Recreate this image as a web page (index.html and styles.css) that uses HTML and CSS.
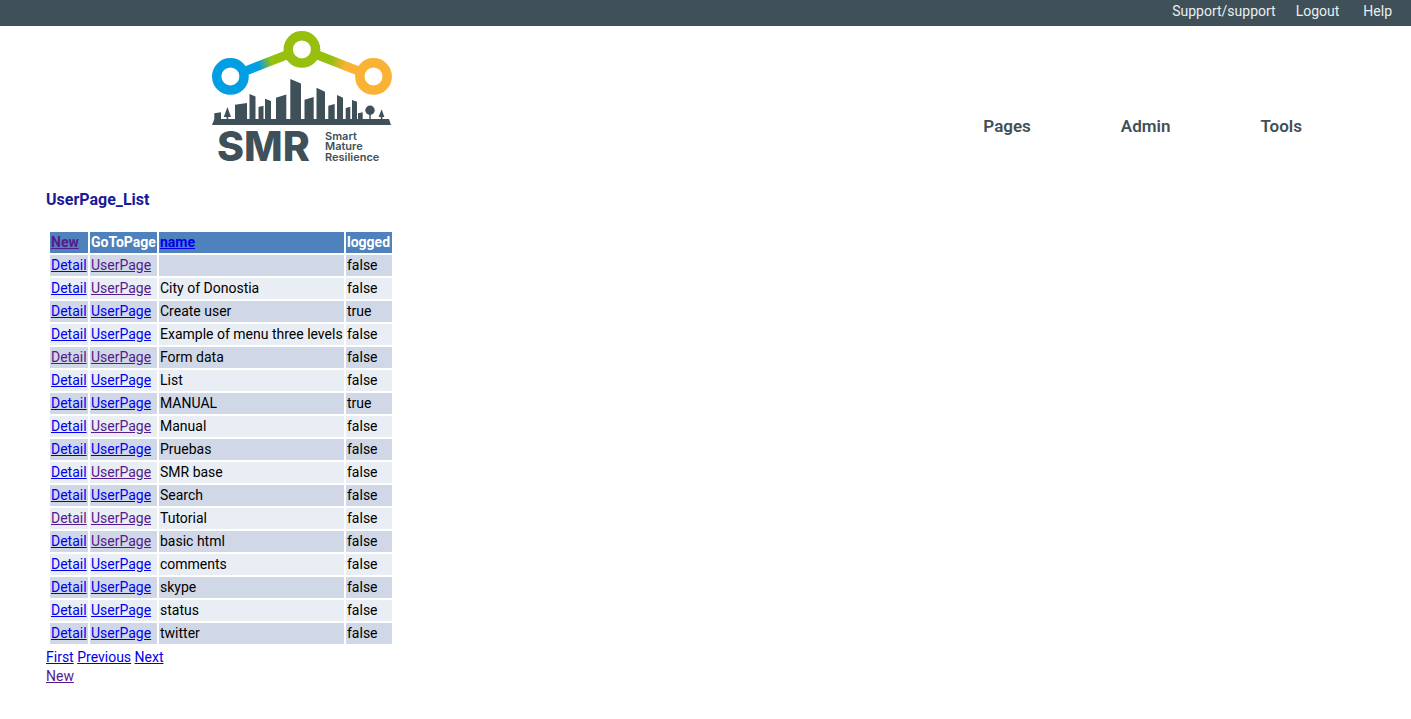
FILE: index.html
```html
<!DOCTYPE html>
<html lang="en">
<head>
<meta charset="utf-8">
<title>UserPage_List</title>
<link rel="stylesheet" href="styles.css">
</head>
<body>
<nav class="topbar" aria-label="Account">
  <a href="#">Support/support</a>
  <a href="#">Logout</a>
  <a class="help" href="#">Help</a>
</nav>
<header class="header">
  <a class="logo" href="#" aria-label="SMR home">
    <svg width="180" height="134" viewBox="212 30 180 134">
      <defs>
        <linearGradient id="bg" gradientUnits="userSpaceOnUse" x1="248" y1="70" x2="284" y2="57">
          <stop offset="0.3" stop-color="#009fe3"/><stop offset="0.65" stop-color="#97bf0d"/>
        </linearGradient>
        <linearGradient id="go" gradientUnits="userSpaceOnUse" x1="320" y1="57" x2="356" y2="70">
          <stop offset="0.3" stop-color="#97bf0d"/><stop offset="0.7" stop-color="#f9b233"/>
        </linearGradient>
      </defs>
      <path d="M243 72L289 54" stroke="url(#bg)" stroke-width="9"/>
      <path d="M315 54L361 72" stroke="url(#go)" stroke-width="9"/>
      <g fill="#fff" stroke-width="9.4">
        <circle cx="230.4" cy="76.4" r="13.7" stroke="#009fe3"/>
        <circle cx="301.9" cy="49.4" r="13.7" stroke="#97bf0d"/>
        <circle cx="373.5" cy="76.4" r="13.7" stroke="#f9b233"/>
      </g>
      <g fill="#3f5058">
        <path d="M212 125L214.3 119V113.3L221 112.3V119H226.6V117H223.8L227.4 107L231 117H228.2V119H235V104.7L247 103V119H249.5V94L255.5 96.5V119H258.5V107L263.5 105.7V119H265V98.7L271 101V119H276V97.7L286.3 94.5V119H290.3V79L301 83.5V119H304.5V99.7L313.7 97V119H316.5V87.7L325 91.7V119H328.3V105.7L334.7 104V119H337V95L343 97.7V119H345.7V108L350.3 106.7V119H352V100L357 101.7V119H358V113.3L362.7 112.3V119H369.3V114H370.7V119H380.8V117H378.6L381.6 109.3L384.4 117H382.4V119H389L391 125Z"/>
        <circle cx="370" cy="110.3" r="4.7"/>
        <text class="logo-name" x="217" y="161">SMR</text>
        <text class="logo-tag" x="325" y="140">Smart</text>
        <text class="logo-tag" x="325" y="150">Mature</text>
        <text class="logo-tag" x="325" y="161">Resilience</text>
      </g>
    </svg>
  </a>
  <nav class="menu" aria-label="Main">
    <a href="#">Pages</a>
    <a href="#">Admin</a>
    <a href="#">Tools</a>
  </nav>
</header>
<main class="content">
  <h1 class="title">UserPage_List</h1>
  <table class="list">
    <colgroup><col class="col-detail"><col class="col-page"><col class="col-name"><col class="col-logged"></colgroup>
    <thead>
      <tr><th><a class="seen" href="#">New</a></th><th>GoToPage</th><th><a href="#">name</a></th><th>logged</th></tr>
    </thead>
    <tbody>
      <tr><td><a href="#">Detail</a></td><td><a class="seen" href="#">UserPage</a></td><td></td><td>false</td></tr>
      <tr><td><a href="#">Detail</a></td><td><a class="seen" href="#">UserPage</a></td><td>City of Donostia</td><td>false</td></tr>
      <tr><td><a href="#">Detail</a></td><td><a href="#">UserPage</a></td><td>Create user</td><td>true</td></tr>
      <tr><td><a href="#">Detail</a></td><td><a href="#">UserPage</a></td><td>Example of menu three levels</td><td>false</td></tr>
      <tr><td><a class="seen" href="#">Detail</a></td><td><a class="seen" href="#">UserPage</a></td><td>Form data</td><td>false</td></tr>
      <tr><td><a href="#">Detail</a></td><td><a href="#">UserPage</a></td><td>List</td><td>false</td></tr>
      <tr><td><a href="#">Detail</a></td><td><a href="#">UserPage</a></td><td>MANUAL</td><td>true</td></tr>
      <tr><td><a href="#">Detail</a></td><td><a class="seen" href="#">UserPage</a></td><td>Manual</td><td>false</td></tr>
      <tr><td><a href="#">Detail</a></td><td><a href="#">UserPage</a></td><td>Pruebas</td><td>false</td></tr>
      <tr><td><a href="#">Detail</a></td><td><a class="seen" href="#">UserPage</a></td><td>SMR base</td><td>false</td></tr>
      <tr><td><a href="#">Detail</a></td><td><a href="#">UserPage</a></td><td>Search</td><td>false</td></tr>
      <tr><td><a class="seen" href="#">Detail</a></td><td><a class="seen" href="#">UserPage</a></td><td>Tutorial</td><td>false</td></tr>
      <tr><td><a href="#">Detail</a></td><td><a class="seen" href="#">UserPage</a></td><td>basic html</td><td>false</td></tr>
      <tr><td><a href="#">Detail</a></td><td><a href="#">UserPage</a></td><td>comments</td><td>false</td></tr>
      <tr><td><a href="#">Detail</a></td><td><a href="#">UserPage</a></td><td>skype</td><td>false</td></tr>
      <tr><td><a href="#">Detail</a></td><td><a href="#">UserPage</a></td><td>status</td><td>false</td></tr>
      <tr><td><a href="#">Detail</a></td><td><a href="#">UserPage</a></td><td>twitter</td><td>false</td></tr>
    </tbody>
  </table>
  <div class="pager"><a href="#">First</a> <a href="#">Previous</a> <a href="#">Next</a></div>
  <div><a class="seen" href="#">New</a></div>
</main>
</body>
</html>
```
FILE: styles.css
```css
body {
  margin: 0;
  background: #fff;
  color: #000;
  font: 14px/19px Roboto, sans-serif;
}

a {
  color: #0000ee;
}

.seen {
  color: #551a8b;
}

.topbar {
  display: flex;
  justify-content: flex-end;
  gap: 20px;
  padding: 1px 19px 5px;
  background: #3f5058;
  line-height: 20px;
}

.topbar a {
  color: #e9eef0;
  text-decoration: none;
}

.topbar .help {
  margin-left: 4px;
}

.header {
  display: flex;
  justify-content: space-between;
  align-items: flex-start;
  padding: 4px 109px 0 15%;
}

.logo svg {
  display: block;
  overflow: visible;
}

.logo-name {
  font: 800 41px Inter, sans-serif;
}

.logo-tag {
  font: 600 11px Inter, sans-serif;
}

.menu {
  display: flex;
  gap: 90px;
  padding-top: 86px;
}

.menu a {
  color: #3f5058;
  font-size: 17px;
  font-weight: 600;
  line-height: 20px;
  text-decoration: none;
}

.content {
  padding: 26px 46px;
}

.title {
  margin: 0 0 20px;
  color: #1a1a96;
  font-size: 16px;
  font-weight: 700;
  line-height: 20px;
}

.list {
  margin: 0 2px 2px;
  border-spacing: 2px;
}

.col-detail {
  width: 38px;
}

.col-page {
  width: 67px;
}

.col-name {
  width: 185px;
}

.col-logged {
  width: 46px;
}

.list th,
.list td {
  padding: 1px;
  height: 19px;
  text-align: left;
  white-space: nowrap;
}

.list th {
  background: #4f81bd;
  color: #fff;
}

.list td {
  background: #e9edf4;
}

.list tbody tr:nth-child(odd) td {
  background: #d0d8e8;
}
```
